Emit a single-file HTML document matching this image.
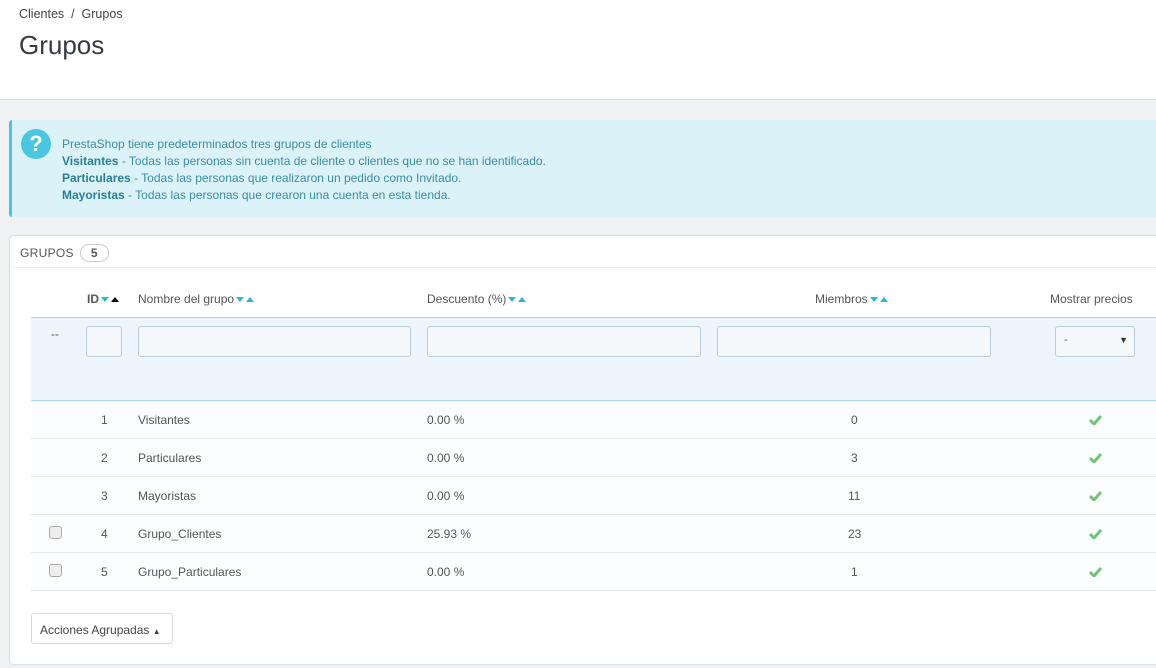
<!DOCTYPE html>
<html><head><meta charset="utf-8"><style>
*{box-sizing:border-box;margin:0;padding:0}
body{width:1156px;height:668px;background:#eff1f2;font-family:"Liberation Sans",sans-serif;font-size:12px;color:#555;position:relative;overflow:hidden}
.hdr{position:absolute;left:0;top:0;width:1156px;height:100px;background:#fff;border-bottom:1px solid #d9dcde}
.bc{position:absolute;left:19px;top:7px;font-size:12.5px;color:#444}
h1{position:absolute;left:19px;top:30px;font-size:26px;font-weight:normal;color:#363a41}
.alert{position:absolute;left:9px;top:120px;width:1147px;height:97px;background:#dbf2f8;border-left:3px solid #4ac7e0;border-radius:3px 0 0 3px;color:#3a8ea3;font-size:12px;line-height:17px;padding:16px 0 0 50px}
.alert b{color:#2a7f95}
.q{position:absolute;left:9px;top:9px;width:30px;height:30px;border-radius:50%;background:#4ac7e0;color:#fff;font-weight:bold;font-size:22px;text-align:center;line-height:30px}
.panel{position:absolute;left:9px;top:235px;width:1160px;height:430px;background:#fff;border:1px solid #dcdfe1;border-radius:4px}
.ph{position:absolute;left:10px;top:8px;font-size:12px;color:#555;letter-spacing:.3px}
.badge{display:inline-block;margin-left:6px;border:1px solid #ccc;border-radius:10px;padding:0 10px;font-weight:bold;font-size:12px;line-height:16px}
.pl{position:absolute;left:0;top:31px;width:1160px;border-top:1px solid #eee}
.abs{position:absolute}
.th{top:56px;font-size:12px;color:#555;white-space:nowrap}
.dn,.up{display:inline-block;width:0;height:0;border-left:4px solid transparent;border-right:4px solid transparent;vertical-align:middle;margin-left:2px}
.dn{border-top:5px solid #25b9d7}
.up{border-bottom:5px solid #25b9d7}
.up.k{border-bottom-color:#000}
.filt{left:21px;top:81px;width:1140px;height:84px;background:#edf4fb;border-top:1px solid #a8d8ef;border-bottom:1px solid #a8d8ef}
.inp{position:absolute;top:8px;height:31px;background:#f4f8fb;border:1px solid #bbcdd9;border-radius:3px}
.row{position:absolute;left:21px;width:1140px;height:38px;background:#fcfdfe;border-bottom:1px solid #e6e8ea}
.row span{position:absolute;top:12px;font-size:12px;color:#555}
.cb{position:absolute;left:18px;top:11px;width:13px;height:13px;border:1px solid #aaa;border-radius:3px;background:#eee}
.chk{position:absolute;left:1058px;top:13px}
.btn{position:absolute;left:21px;top:377px;width:142px;height:31px;border:1px solid #d3d8db;border-radius:3px;background:#fff;font-size:12px;color:#444;padding:9px 0 0 8px}
</style></head><body>
<div class="hdr"><div class="bc">Clientes &nbsp;/&nbsp; Grupos</div><h1>Grupos</h1></div>
<div class="alert"><div class="q">?</div>PrestaShop tiene predeterminados tres grupos de clientes<br><b>Visitantes</b> - Todas las personas sin cuenta de cliente o clientes que no se han identificado.<br><b>Particulares</b> - Todas las personas que realizaron un pedido como Invitado.<br><b>Mayoristas</b> - Todas las personas que crearon una cuenta en esta tienda.</div>
<div class="panel">
<div class="ph">GRUPOS<span class="badge">5</span></div>
<div class="pl"></div>
<div class="abs th" style="left:77px"><b>ID</b><i class="dn"></i><i class="up k"></i></div>
<div class="abs th" style="left:128px">Nombre del grupo<i class="dn"></i><i class="up"></i></div>
<div class="abs th" style="left:417px">Descuento (%)<i class="dn"></i><i class="up"></i></div>
<div class="abs th" style="left:805px">Miembros<i class="dn"></i><i class="up"></i></div>
<div class="abs th" style="left:1040px">Mostrar precios</div>
<div class="abs filt">
<span class="abs" style="left:20px;top:9px">--</span>
<div class="inp" style="left:55px;width:36px"></div>
<div class="inp" style="left:107px;width:273px"></div>
<div class="inp" style="left:396px;width:274px"></div>
<div class="inp" style="left:686px;width:274px"></div>
<div class="inp" style="left:1024px;width:80px;font-size:11px;padding:7px 0 0 8px;color:#555">-<span style="position:absolute;right:6px;top:8px;font-size:9px;color:#333">▼</span></div>
</div>
<div class="row" style="top:165px"><span style="left:70px">1</span><span style="left:107px">Visitantes</span><span style="left:396px">0.00 %</span><span style="left:820px">0</span><svg class="chk" width="13" height="11" viewBox="0 0 13 11"><path d="M1 6l4 4 7-8" fill="none" stroke="#72c279" stroke-width="3"/></svg></div>
<div class="row" style="top:203px"><span style="left:70px">2</span><span style="left:107px">Particulares</span><span style="left:396px">0.00 %</span><span style="left:820px">3</span><svg class="chk" width="13" height="11" viewBox="0 0 13 11"><path d="M1 6l4 4 7-8" fill="none" stroke="#72c279" stroke-width="3"/></svg></div>
<div class="row" style="top:241px"><span style="left:70px">3</span><span style="left:107px">Mayoristas</span><span style="left:396px">0.00 %</span><span style="left:817px">11</span><svg class="chk" width="13" height="11" viewBox="0 0 13 11"><path d="M1 6l4 4 7-8" fill="none" stroke="#72c279" stroke-width="3"/></svg></div>
<div class="row" style="top:279px"><i class="cb"></i><span style="left:70px">4</span><span style="left:107px">Grupo_Clientes</span><span style="left:396px">25.93 %</span><span style="left:817px">23</span><svg class="chk" width="13" height="11" viewBox="0 0 13 11"><path d="M1 6l4 4 7-8" fill="none" stroke="#72c279" stroke-width="3"/></svg></div>
<div class="row" style="top:317px"><i class="cb"></i><span style="left:70px">5</span><span style="left:107px">Grupo_Particulares</span><span style="left:396px">0.00 %</span><span style="left:820px">1</span><svg class="chk" width="13" height="11" viewBox="0 0 13 11"><path d="M1 6l4 4 7-8" fill="none" stroke="#72c279" stroke-width="3"/></svg></div>
<div class="btn">Acciones Agrupadas <span style="font-size:8px">▲</span></div>
</div>
</body></html>
